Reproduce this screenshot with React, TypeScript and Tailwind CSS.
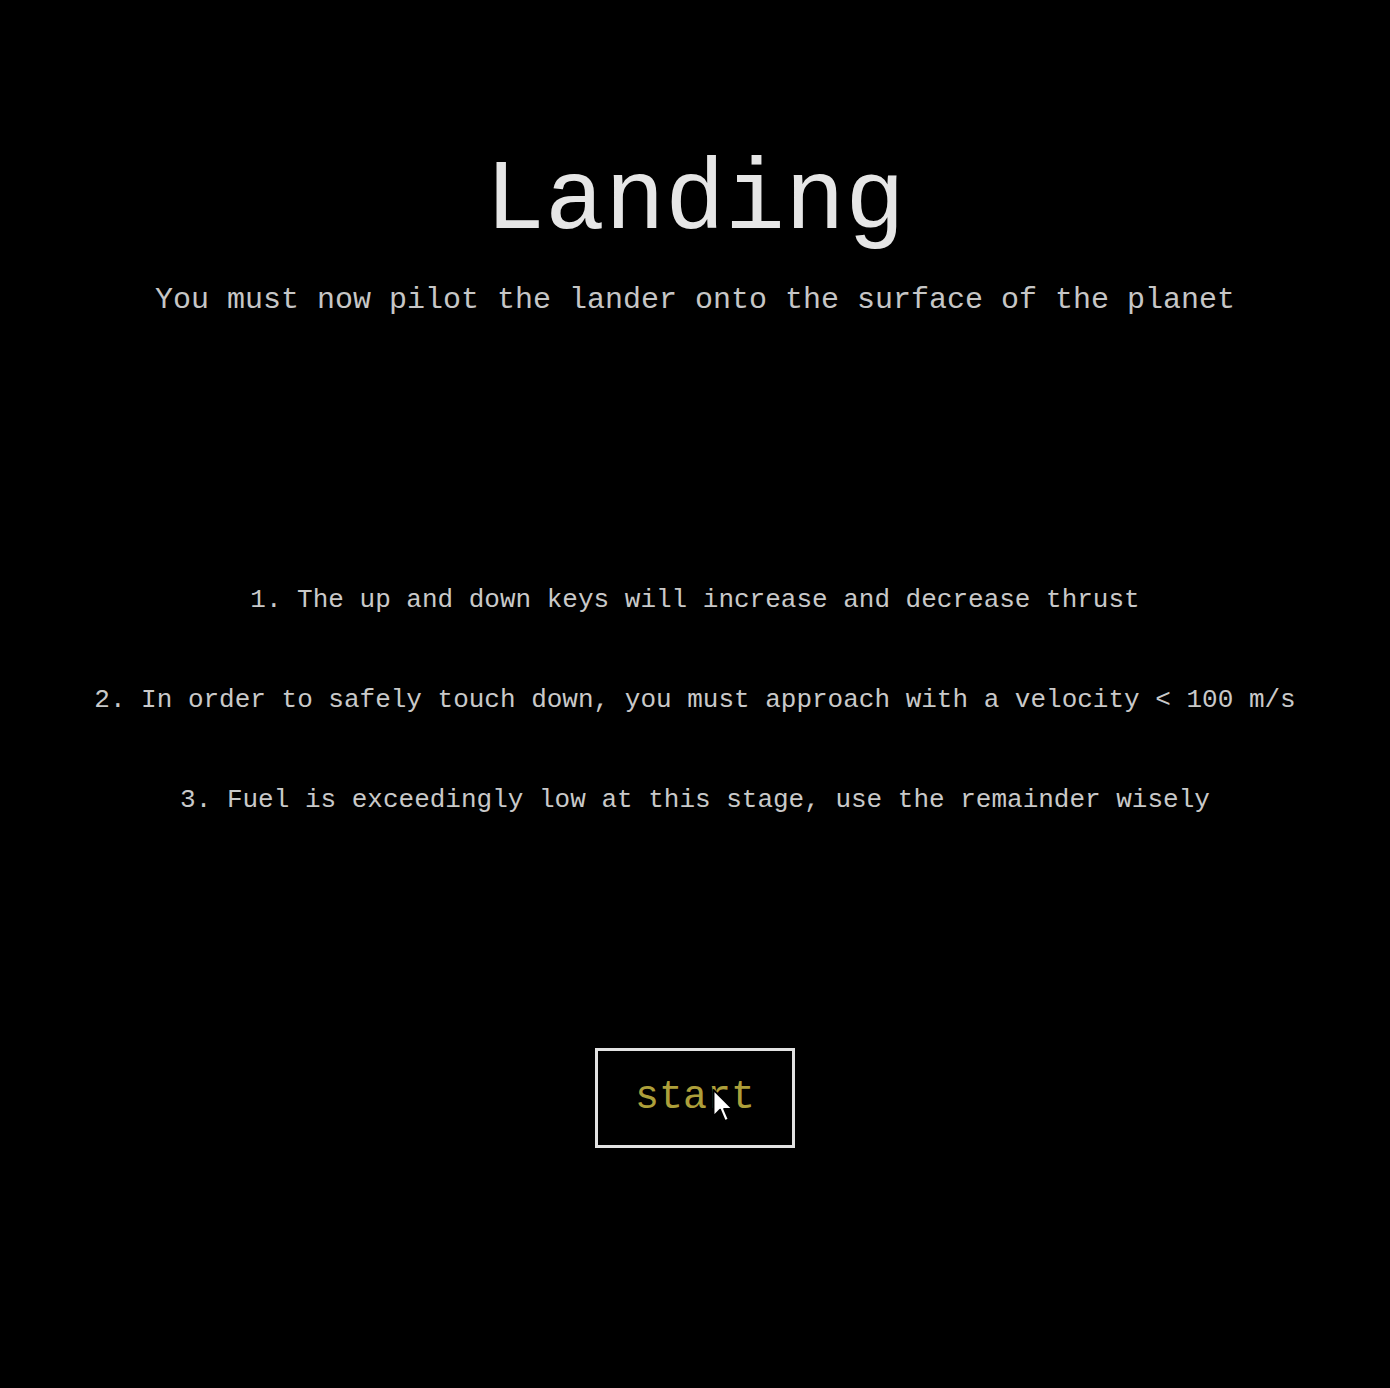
import React from 'react';

const mono = { fontFamily: '"Liberation Mono", "Courier New", monospace' };

const rules = [
    '1. The up and down keys will increase and decrease thrust',
    '2. In order to safely touch down, you must approach with a velocity < 100 m/s',
    '3. Fuel is exceedingly low at this stage, use the remainder wisely',
];

// little pointer drawn over the button, like in the capture
function Pointer() {
    return (
        <svg
            width="24"
            height="36"
            viewBox="0 0 12 19"
            className="absolute left-[116px] top-[40px]"
        >
            <path
                d="M1 1 L1 15 L4.5 11.5 L7 17.5 L9 16.6 L6.6 11 L11 11 Z"
                fill="#ffffff"
                stroke="#000000"
                strokeWidth="1"
                strokeLinejoin="round"
            />
        </svg>
    );
}

export default function App() {
    return (
        <div
            className="w-full min-h-[1388px] bg-black flex flex-col items-center"
            style={mono}
        >
            <h1 className="mt-[152px] text-[100px] leading-[100px] text-[#e6e6e6]">
                Landing
            </h1>
            <p className="mt-[31px] text-[30px] leading-[34px] text-[#c6c6c6] whitespace-pre">
                You must now pilot the lander onto the surface of the planet
            </p>

            <div className="mt-[268px] flex flex-col items-center gap-[70px]">
                {rules.map((r) => (
                    <p
                        key={r}
                        className="text-[26px] leading-[30px] text-[#c9c9c9] whitespace-pre"
                    >
                        {r}
                    </p>
                ))}
            </div>

            <div className="mt-[233px] relative">
                <button className="w-[200px] h-[100px] border-[3px] border-[#e2e2e2] bg-black text-[40px] text-[#ad9f3a] flex items-center justify-center">
                    start
                </button>
                <Pointer />
            </div>
        </div>
    );
}
